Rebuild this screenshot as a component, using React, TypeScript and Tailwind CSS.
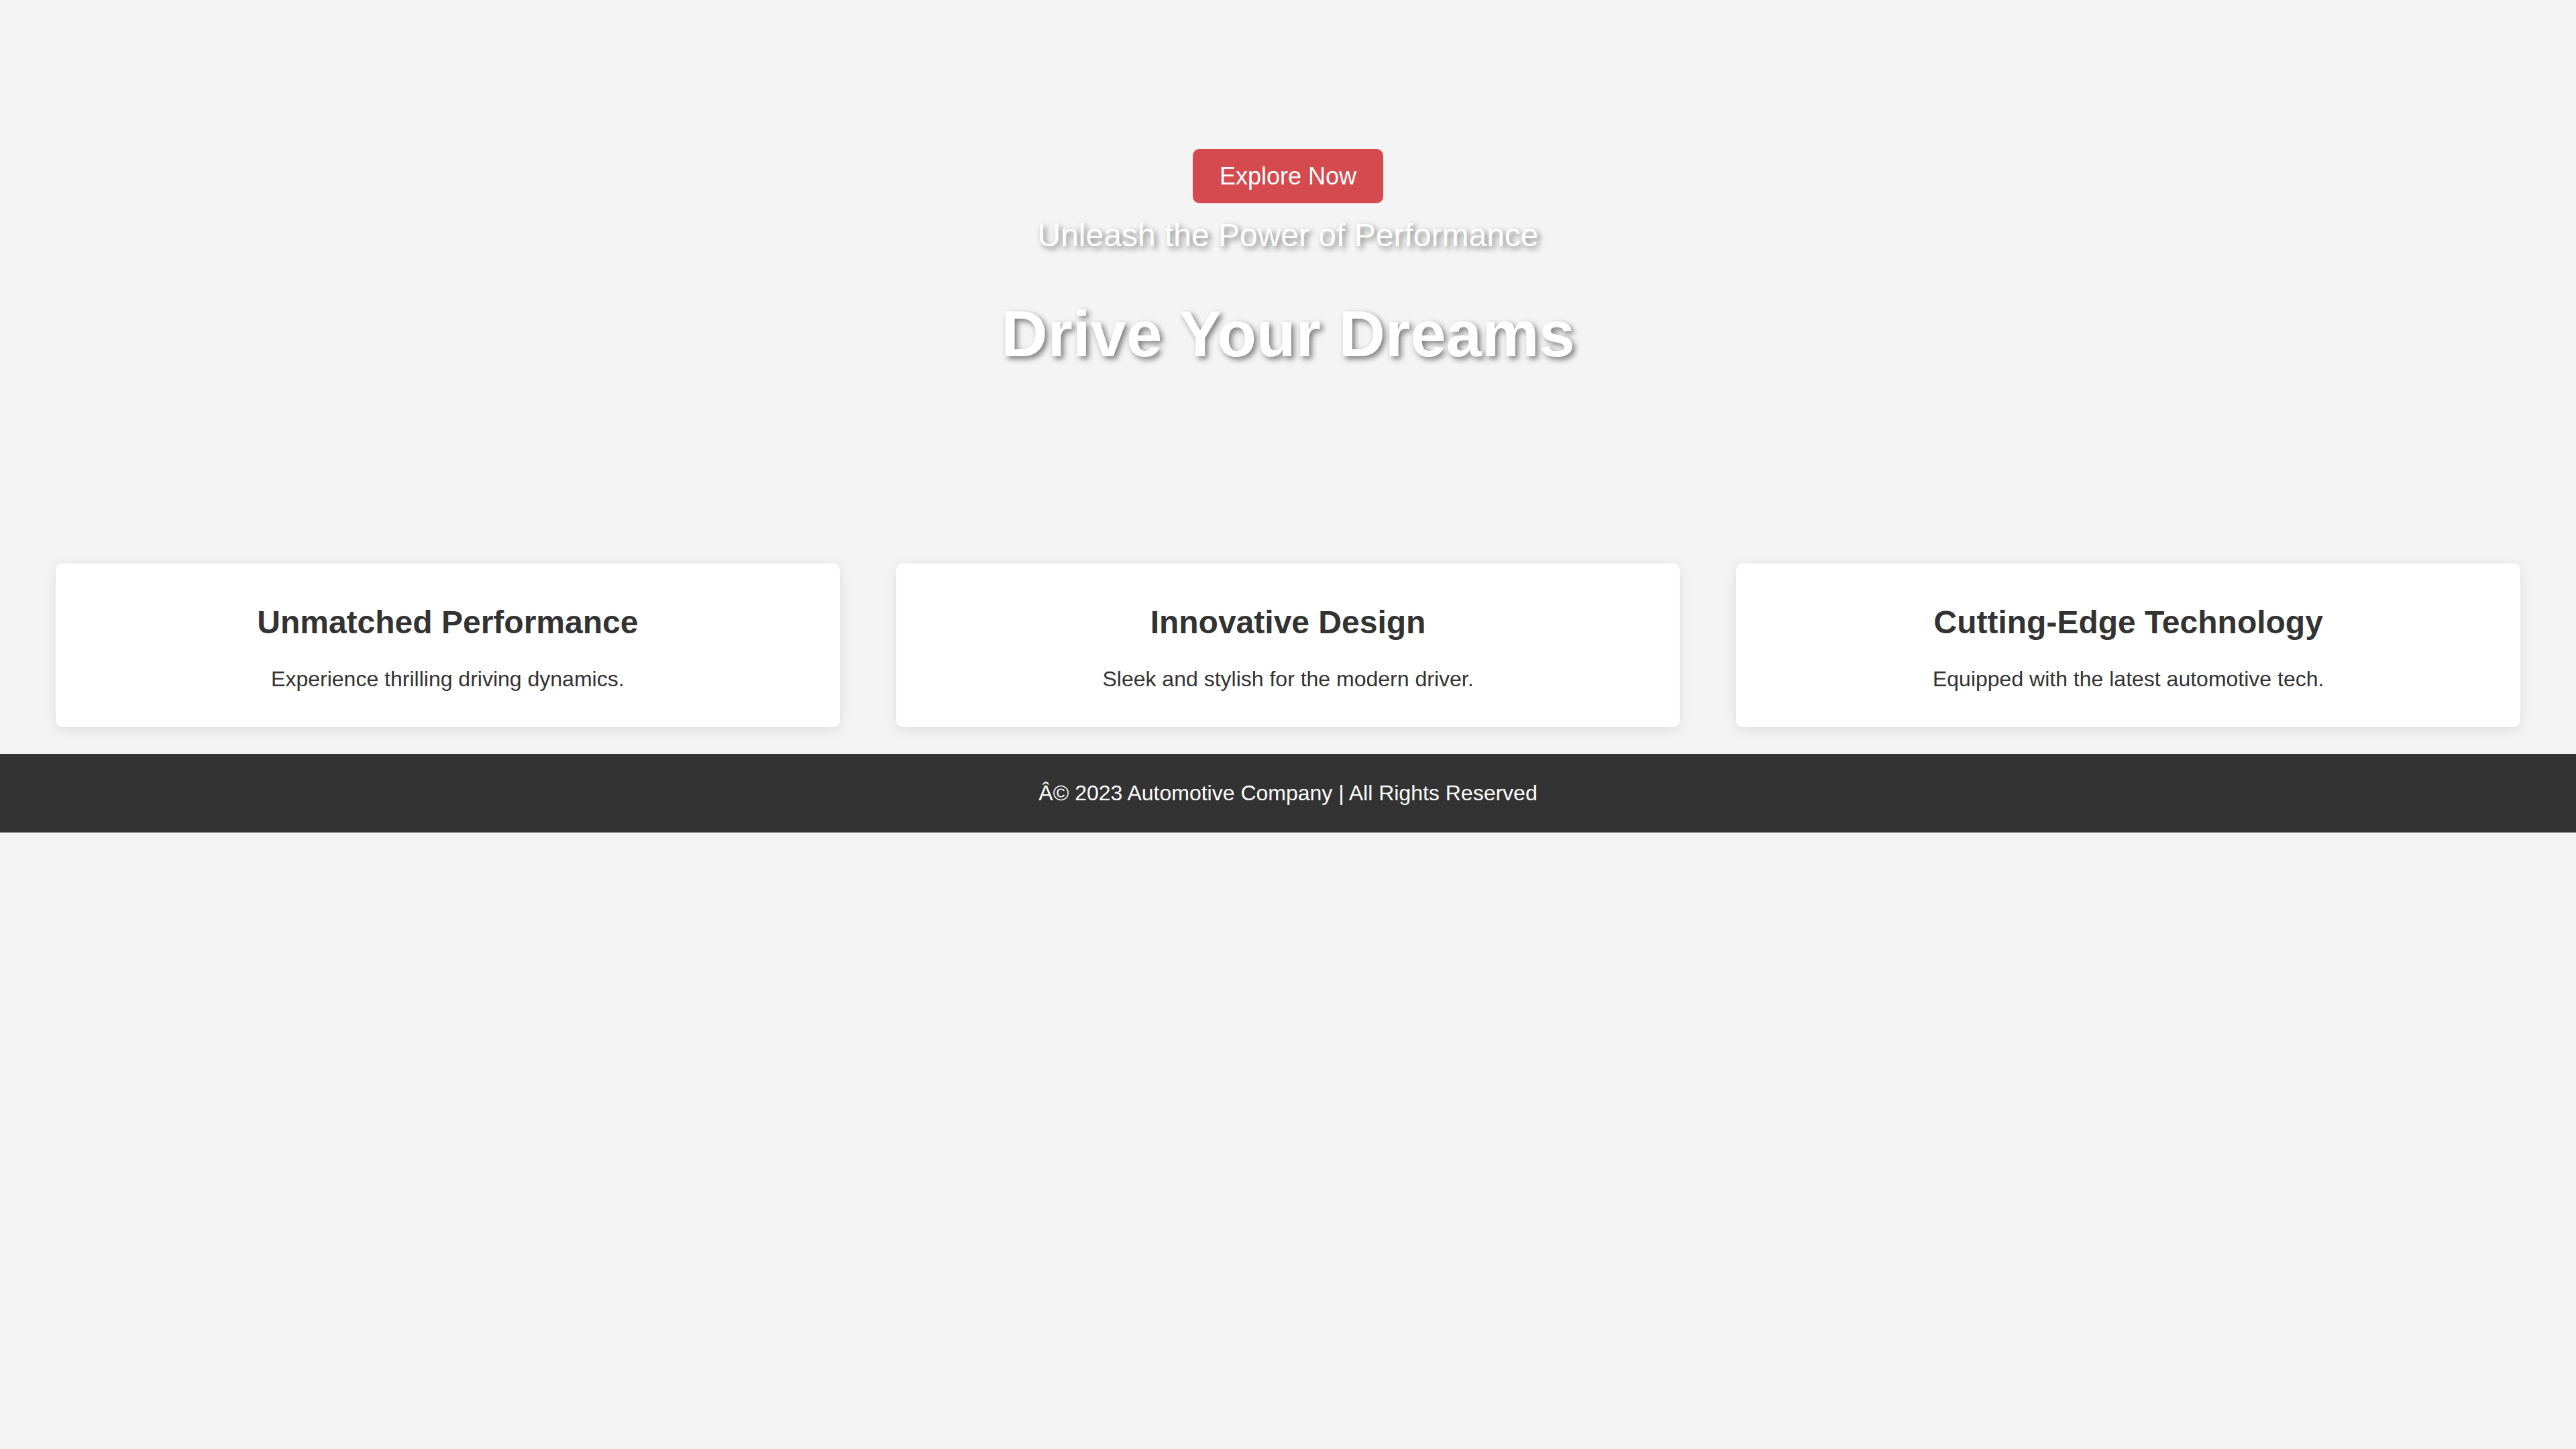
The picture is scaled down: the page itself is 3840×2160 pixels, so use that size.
import React from 'react'

type Feature = { title: string; text: string }

const features: Feature[] = [
  { title: 'Unmatched Performance', text: 'Experience thrilling driving dynamics.' },
  { title: 'Innovative Design', text: 'Sleek and stylish for the modern driver.' },
  { title: 'Cutting-Edge Technology', text: 'Equipped with the latest automotive tech.' },
]

function FeatureCard({ feature }: { feature: Feature }) {
  return (
    <div className="flex-1 bg-white rounded-[10px] shadow-[0_4px_20px_rgba(0,0,0,0.1)] pt-[60px] pb-[53px] px-10 text-center">
      <h3 className="text-[48px] leading-[1.15] font-bold text-[#333]">{feature.title}</h3>
      <p className="mt-[39px] text-[32px] leading-[1.15] text-[#333]">{feature.text}</p>
    </div>
  )
}

export default function App() {
  return (
    <div className="min-h-screen bg-[#f4f4f4] font-['Liberation_Sans',Arial,sans-serif] text-[#333]">
      {/* hero */}
      <section className="flex flex-col items-center text-center pt-[222px] pb-[287px]">
        <button className="bg-[#d44a4e] text-white text-[36px] leading-[1.15] px-10 py-5 rounded-[10px]">
          Explore Now
        </button>
        <p className="mt-5 text-[48px] leading-[1.15] text-white [text-shadow:4px_4px_8px_rgba(0,0,0,0.5)]">
          Unleash the Power of Performance
        </p>
        <h1 className="mt-16 text-[96px] leading-[1.15] font-bold text-white [text-shadow:4px_4px_8px_rgba(0,0,0,0.5)]">
          Drive Your Dreams
        </h1>
      </section>

      {/* features */}
      <section className="flex gap-[84px] px-[83px] pb-10">
        {features.map((f) => (
          <FeatureCard key={f.title} feature={f} />
        ))}
      </section>

      <footer className="bg-[#333] text-white text-center text-[32px] leading-[1.15] py-10">
        Â© 2023 Automotive Company | All Rights Reserved
      </footer>
    </div>
  )
}
